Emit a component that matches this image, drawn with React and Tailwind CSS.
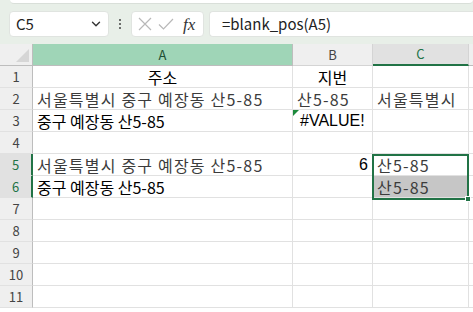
import React from 'react';
import { ChevronDown } from 'lucide-react';

const font = { fontFamily: '"Noto Sans CJK KR", "Noto Sans", sans-serif' };
const latin = { fontFamily: '"Liberation Sans", "Noto Sans CJK KR", sans-serif' };

// X: 결과 글꼴 (넓고 옅음), Y: 입력 글꼴
const X = 'text-[#3c3c3c] tracking-[1.2px]';
const Y = 'text-black';

const rows = [
  { n: 1, a: '주소', aCls: 'justify-center text-black', b: '지번', bCls: 'justify-center text-black', c: '' },
  { n: 2, a: '서울특별시 중구 예장동 산5-85', aCls: X, b: '산5-85', bCls: X, c: '서울특별시', cCls: X },
  { n: 3, a: '중구 예장동 산5-85', aCls: Y, b: '#VALUE!', bCls: 'text-black pl-[7px]', bLatin: true, err: true, c: '' },
  { n: 4, a: '', b: '', c: '' },
  { n: 5, a: '서울특별시 중구 예장동 산5-85', aCls: X, b: '6', bCls: 'justify-end text-black', bLatin: true, c: '산5-85', cCls: X, sel: true },
  { n: 6, a: '중구 예장동 산5-85', aCls: Y, b: '', c: '산5-85', cCls: `${X} bg-[#c6c6c6]`, sel: true },
  { n: 7 }, { n: 8 }, { n: 9 }, { n: 10 }, { n: 11 },
];

function FormulaBar() {
  return (
    <div className="bg-[#e8efe8] h-[44px] relative">
      <div className="absolute left-[10px] right-0 top-0 h-[4px] bg-white rounded-b-[4px] border-b border-[#d9dfd9]" />
      <div className="flex items-center pt-[11px] h-[37px]">
        <div className="ml-[9px] w-[100px] h-[26px] bg-white rounded-[4px] border border-[#e0e4e0] flex items-center justify-between pl-[6px] pr-[5px]">
          <span className="text-[15px] text-[#222]" style={font}>C5</span>
          <ChevronDown size={14} strokeWidth={2.4} className="text-[#333]" />
        </div>
        <div className="w-[22px] flex flex-col items-center gap-[2px]">
          <span className="w-[2px] h-[2px] bg-[#444] rounded-full" />
          <span className="w-[2px] h-[2px] bg-[#444] rounded-full" />
          <span className="w-[2px] h-[2px] bg-[#444] rounded-full" />
        </div>
        <div className="w-[73px] h-[26px] bg-white rounded-[4px] border border-[#e0e4e0] flex items-center pl-[6px] gap-[6px]">
          <svg width="14" height="14" viewBox="0 0 14 14">
            <path d="M1 1L13 13M13 1L1 13" stroke="#b8b8b8" strokeWidth="1.2" fill="none" />
          </svg>
          <svg width="16" height="14" viewBox="0 0 16 14">
            <path d="M1 7.5L5.5 12L15 2" stroke="#b8b8b8" strokeWidth="1.2" fill="none" />
          </svg>
          <span className="ml-[3px] text-[17px] italic text-[#333] leading-none" style={{ fontFamily: '"Liberation Serif", serif' }}>fx</span>
        </div>
        <div className="ml-[5px] flex-1 h-[26px] bg-white rounded-l-[4px] border border-r-0 border-[#e0e4e0] flex items-center pl-[12px]">
          <span className="text-[15px] text-[#222]" style={font}>=blank_pos(A5)</span>
        </div>
      </div>
    </div>
  );
}

function Cell({ children, cls = '', latinFont }) {
  return (
    <div
      className={`h-[22px] border-r border-b border-[#e1e1e1] flex items-center px-[4px] text-[16px] whitespace-nowrap overflow-visible ${cls}`}
      style={latinFont ? latin : font}
    >
      {children}
    </div>
  );
}

export default function App() {
  return (
    <div className="w-[473px] h-[312px] overflow-hidden bg-white">
      <FormulaBar />
      <div className="relative">
        <div className="grid grid-cols-[33px_260px_80px_96px_1fr]">
          <div className="h-[22px] bg-[#efefef] border-r border-b border-[#bdbdbd] relative">
            <div className="absolute right-[3px] bottom-[3px] w-0 h-0 border-l-[13px] border-l-transparent border-b-[13px] border-b-[#d6d6d6]" />
          </div>
          <div className="h-[22px] bg-[#9fd5b7] border-r border-b border-[#bdbdbd] flex items-center justify-center text-[13px] text-[#1e4e34]" style={font}>A</div>
          <div className="h-[22px] bg-[#efefef] border-r border-b border-[#d4d4d4] flex items-center justify-center text-[13px] text-[#444]" style={font}>B</div>
          <div className="h-[22px] bg-[#e1e1e1] border-r border-b-2 border-r-[#d4d4d4] border-b-[#217346] flex items-center justify-center text-[13px] text-[#217346]" style={font}>C</div>
          <div className="h-[22px] bg-[#efefef] border-b border-[#bdbdbd]" />

          {rows.map((r) => (
            <React.Fragment key={r.n}>
              <div
                className={`h-[22px] border-b border-[#e1e1e1] flex items-center justify-center text-[13px] ${
                  r.sel ? 'bg-[#e1e1e1] text-[#217346] border-r-2 border-r-[#217346]' : 'bg-[#efefef] text-[#444] border-r border-r-[#bdbdbd]'
                }`}
                style={font}
              >
                {r.n}
              </div>
              <Cell cls={r.aCls}>{r.a}</Cell>
              <Cell cls={`relative ${r.bCls || ''}`} latinFont={r.bLatin}>
                {r.err && (
                  <span className="absolute left-0 top-0 w-0 h-0 border-t-[6px] border-t-[#1d8a3c] border-r-[6px] border-r-transparent" />
                )}
                {r.b}
              </Cell>
              <Cell cls={r.cCls}>{r.c}</Cell>
              <Cell />
            </React.Fragment>
          ))}
        </div>
        <div className="absolute left-[372px] top-[110px] w-[97px] h-[46px] border-2 border-[#217346] pointer-events-none" />
        <div className="absolute left-[465px] top-[152px] w-[6px] h-[6px] bg-[#217346] border border-white" />
      </div>
    </div>
  );
}
